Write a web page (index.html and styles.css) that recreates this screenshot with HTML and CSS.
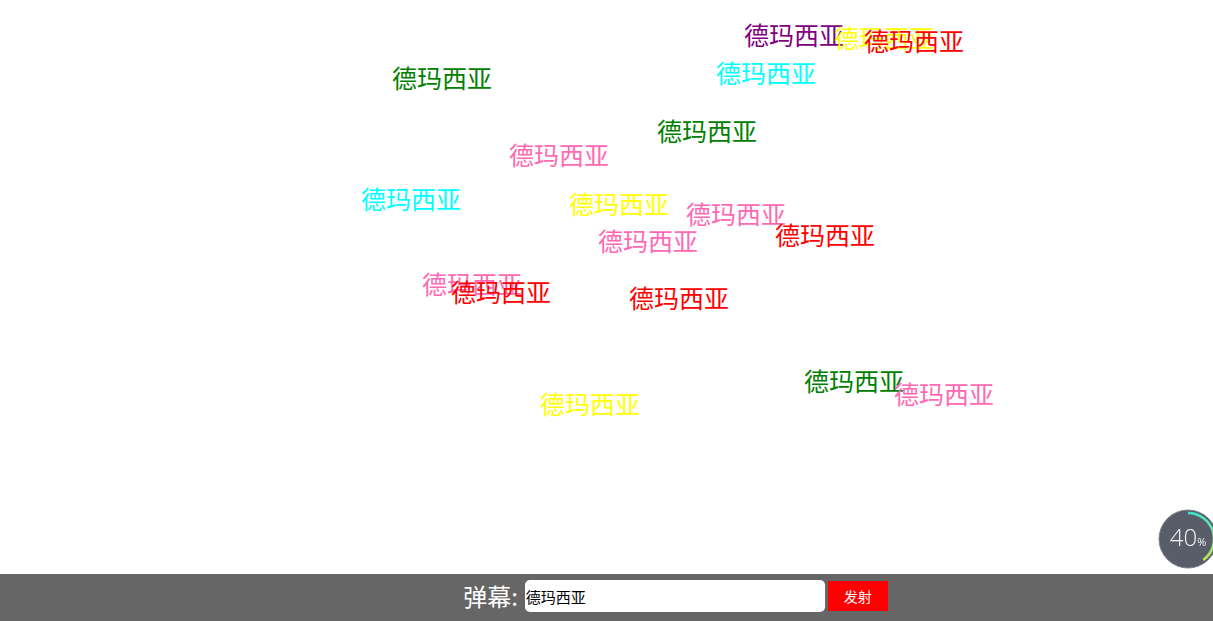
FILE: index.html
```html
<!DOCTYPE html>
<html lang="zh-CN">
<head>
    <meta charset="UTF-8">
    <title>弹幕</title>
    <link rel="stylesheet" href="styles.css">
</head>
<body>

    <div class="screen">
        <span class="dm purple" style="left:744px; top:19px">德玛西亚</span>
        <span class="dm yellow" style="left:834px; top:22px">德玛西亚</span>
        <span class="dm red" style="left:864px; top:25px">德玛西亚</span>
        <span class="dm cyan" style="left:716px; top:57px">德玛西亚</span>
        <span class="dm green" style="left:392px; top:62px">德玛西亚</span>
        <span class="dm green" style="left:657px; top:115px">德玛西亚</span>
        <span class="dm pink" style="left:509px; top:139px">德玛西亚</span>
        <span class="dm cyan" style="left:361px; top:183px">德玛西亚</span>
        <span class="dm yellow" style="left:569px; top:188px">德玛西亚</span>
        <span class="dm pink" style="left:686px; top:198px">德玛西亚</span>
        <span class="dm pink" style="left:598px; top:225px">德玛西亚</span>
        <span class="dm red" style="left:775px; top:219px">德玛西亚</span>
        <span class="dm pink" style="left:422px; top:268px">德玛西亚</span>
        <span class="dm red" style="left:451px; top:276px">德玛西亚</span>
        <span class="dm red" style="left:629px; top:282px">德玛西亚</span>
        <span class="dm green" style="left:804px; top:365px">德玛西亚</span>
        <span class="dm pink" style="left:894px; top:378px">德玛西亚</span>
        <span class="dm yellow" style="left:540px; top:388px">德玛西亚</span>
    </div>

    <div class="speed-ball">
        <svg width="60" height="60" viewBox="0 0 60 60">
            <defs>
                <linearGradient id="arcGrad" x1="0" y1="0" x2="0" y2="1">
                    <stop offset="0" stop-color="#3fe6cf"/>
                    <stop offset="1" stop-color="#b9e84f"/>
                </linearGradient>
            </defs>
            <circle cx="30" cy="30" r="29" fill="#585d69" stroke="#7a7f89" stroke-width="1"/>
            <path d="M30 4 A26 26 0 0 1 45.3 51" fill="none" stroke="url(#arcGrad)" stroke-width="2.5"/>
        </svg>
        <span class="ball-text">40<small>%</small></span>
    </div>

    <div class="send-bar">
        <label class="send-label" for="msg">弹幕:</label>
        <input class="send-input" id="msg" type="text" value="德玛西亚">
        <button class="send-btn">发射</button>
    </div>

</body>
</html>
```

FILE: styles.css
```css
body {
    margin: 0;
    padding: 0;
    background: #fff;
    font-family: "Microsoft YaHei", "Noto Sans CJK SC", sans-serif;
    overflow: hidden;
}

.screen {
    position: relative;
    height: 574px;
}

.dm {
    position: absolute;
    font-size: 25px;
    line-height: 30px;
    white-space: nowrap;
}

.purple { color: #800080; }
.yellow { color: #ffff00; }
.red { color: #ff0000; }
.cyan { color: #00ffff; }
.green { color: #008000; }
.pink { color: #ff69b4; }

.speed-ball {
    position: fixed;
    right: -5px;
    bottom: 52px;
    width: 60px;
    height: 60px;
}

.speed-ball svg {
    display: block;
}

.ball-text {
    position: absolute;
    left: 0;
    top: 0;
    width: 60px;
    line-height: 56px;
    text-align: center;
    color: #f4f5f7;
    font-family: "Open Sans", sans-serif;
    font-weight: 300;
    font-size: 24px;
}

.ball-text small {
    font-size: 11px;
    font-weight: 400;
}

.send-bar {
    position: fixed;
    left: 0;
    right: 0;
    bottom: 0;
    height: 47px;
    box-sizing: border-box;
    background-color: #666;
    display: flex;
    align-items: flex-start;
    justify-content: center;
    padding: 6px 0 0 138px;
}

.send-label {
    color: #fff;
    font-size: 24px;
    line-height: 32px;
    margin-right: 7px;
}

.send-input {
    width: 300px;
    height: 32px;
    box-sizing: border-box;
    border: none;
    border-radius: 5px;
    padding: 0 1px;
    font-family: "Microsoft YaHei", "Noto Sans CJK SC", sans-serif;
    font-size: 15px;
    color: #000;
    outline: none;
    margin-right: 3px;
}

.send-btn {
    width: 60px;
    height: 30px;
    margin-top: 1px;
    border: none;
    background-color: #f00;
    color: #fff;
    font-family: "Microsoft YaHei", "Noto Sans CJK SC", sans-serif;
    font-size: 14px;
    padding: 0;
    cursor: pointer;
}
```
